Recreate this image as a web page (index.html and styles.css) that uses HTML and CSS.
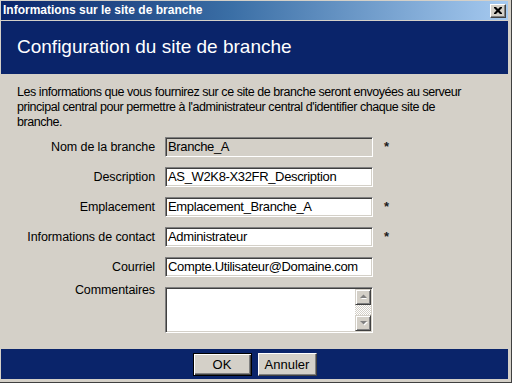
FILE: index.html
```html
<!DOCTYPE html>
<html lang="fr">
<head>
    <meta charset="UTF-8">
    <title>Informations sur le site de branche</title>
    <link rel="stylesheet" href="styles.css">
</head>
<body>
    <div class="window">
        <div class="titlebar">
            <span class="title">Informations sur le site de branche</span>
            <span class="close-btn">
                <svg width="8" height="7" viewBox="0 0 8 7">
                    <path d="M0 0h2l2 2 2-2h2v1l-2.5 2.5L8 6v1H6L4 5 2 7H0V6l2.5-2.5L0 1z" fill="#000"/>
                </svg>
            </span>
        </div>

        <div class="banner">
            <h1>Configuration du site de branche</h1>
        </div>

        <div class="content">
            <p class="intro">Les informations que vous fournirez sur ce site de branche seront envoyées au serveur principal central pour permettre à l'administrateur central d'identifier chaque site de<br>branche.</p>

            <div class="form">
                <label>Nom de la branche</label>
                <div class="field disabled">Branche_A</div>
                <span class="star">*</span>

                <label>Description</label>
                <div class="field">AS_W2K8-X32FR_Description</div>
                <span></span>

                <label>Emplacement</label>
                <div class="field">Emplacement_Branche_A</div>
                <span class="star">*</span>

                <label>Informations de contact</label>
                <div class="field">Administrateur</div>
                <span class="star">*</span>

                <label>Courriel</label>
                <div class="field">Compte.Utilisateur@Domaine.com</div>
                <span></span>

                <label class="top">Commentaires</label>
                <div class="memo">
                    <div class="memo-text"></div>
                    <div class="scrollbar">
                        <span class="arrow">
                            <svg width="9" height="6" viewBox="0 0 9 6">
                                <path d="M2 5h6L5 2z" fill="#fff"/>
                                <path d="M1 4h7L4.5 0.5z" fill="#808080"/>
                            </svg>
                        </span>
                        <span class="track"></span>
                        <span class="arrow">
                            <svg width="9" height="6" viewBox="0 0 9 6">
                                <path d="M2 2h7L5.5 5.5z" fill="#fff"/>
                                <path d="M1 1h7L4.5 4.5z" fill="#808080"/>
                            </svg>
                        </span>
                    </div>
                </div>
                <span></span>
            </div>
        </div>

        <div class="footer">
            <button class="btn default">OK</button>
            <button class="btn">Annuler</button>
        </div>
    </div>
</body>
</html>
```

FILE: styles.css
```css
body {
    margin: 0;
    font-family: "Liberation Sans", Arial, sans-serif;
    font-size: 13px;
    color: #000;
    background-color: #d4d0c8;
}
.window {
    width: 512px;
    height: 383px;
    box-sizing: border-box;
    padding: 1px 3px 3px 1px;
    background-color: #d4d0c8;
    border-right: 1px solid #404040;
    border-bottom: 1px solid #404040;
    display: flex;
    flex-direction: column;
}
.titlebar {
    height: 19px;
    display: flex;
    align-items: center;
    justify-content: space-between;
    padding: 0 2px 0 2px;
    background: linear-gradient(to right, #0a246a 0%, #3a6ea5 45%, #a6caf0 100%);
    margin-bottom: 1px;
}
.title {
    color: #fff;
    font-weight: bold;
    font-size: 12px;
    margin-top: -1px;
}
.close-btn {
    width: 16px;
    height: 14px;
    box-sizing: border-box;
    background-color: #d4d0c8;
    border: 1px solid;
    border-color: #fff #404040 #404040 #fff;
    box-shadow: inset -1px -1px #808080;
    display: flex;
    align-items: center;
    justify-content: center;
}
.banner {
    height: 53px;
    background-color: #0a246a;
    display: flex;
    align-items: center;
    padding-left: 16px;
}
.banner h1 {
    margin: 0 0 2px 0;
    color: #fff;
    font-size: 19px;
    font-weight: normal;
}
.content {
    height: 275px;
    box-sizing: border-box;
    padding: 11px 16px 0 16px;
}
.intro {
    margin: 0;
    font-size: 12.5px;
    letter-spacing: -0.45px;
    line-height: 15px;
}
.form {
    display: grid;
    grid-template-columns: 138px 208px 20px;
    grid-auto-rows: 20px;
    column-gap: 10px;
    row-gap: 10px;
    margin-top: 7px;
}
.form label {
    text-align: right;
    font-size: 12.5px;
    letter-spacing: -0.1px;
    line-height: 20px;
    white-space: nowrap;
}
.form label.top {
    line-height: 15px;
    margin-top: -4px;
}
.field {
    height: 20px;
    box-sizing: border-box;
    background-color: #fff;
    border: 1px solid;
    border-color: #808080 #fff #fff #808080;
    box-shadow: inset 1px 1px #404040, inset -1px -1px #d4d0c8;
    padding: 0 2px;
    line-height: 18px;
    letter-spacing: -0.35px;
    white-space: nowrap;
    overflow: hidden;
}
.field.disabled {
    background-color: #d4d0c8;
}
.star {
    font-weight: bold;
    line-height: 20px;
    color: #1c1c1c;
    padding-left: 1px;
}
.memo {
    grid-row: span 2;
    height: 46px;
    box-sizing: border-box;
    background-color: #fff;
    border: 1px solid;
    border-color: #808080 #fff #fff #808080;
    box-shadow: inset 1px 1px #404040, inset -1px -1px #d4d0c8;
    padding: 1px;
    display: flex;
}
.memo-text {
    flex: 1;
}
.scrollbar {
    width: 16px;
    display: flex;
    flex-direction: column;
}
.arrow {
    height: 16px;
    box-sizing: border-box;
    background-color: #d4d0c8;
    border: 1px solid;
    border-color: #d4d0c8 #404040 #404040 #d4d0c8;
    box-shadow: inset 1px 1px #fff, inset -1px -1px #808080;
    display: flex;
    align-items: center;
    justify-content: center;
}
.track {
    flex: 1;
    background: repeating-conic-gradient(#fff 0 25%, #d4d0c8 0 50%) 0 0 / 2px 2px;
}
.footer {
    height: 30px;
    background-color: #0a246a;
    display: flex;
    justify-content: center;
    align-items: flex-start;
    gap: 6px;
    padding-top: 4px;
    box-sizing: border-box;
}
.btn {
    width: 59px;
    height: 23px;
    box-sizing: border-box;
    background-color: #d4d0c8;
    font-family: "Liberation Sans", Arial, sans-serif;
    font-size: 13px;
    color: #000;
    padding: 0;
    border: 1px solid;
    border-color: #fff #404040 #404040 #fff;
    box-shadow: inset -1px -1px #808080;
}
.btn.default {
    border: 1px solid #000;
    box-shadow: inset 1px 1px #fff, inset -1px -1px #404040, inset -2px -2px #808080;
}
```
